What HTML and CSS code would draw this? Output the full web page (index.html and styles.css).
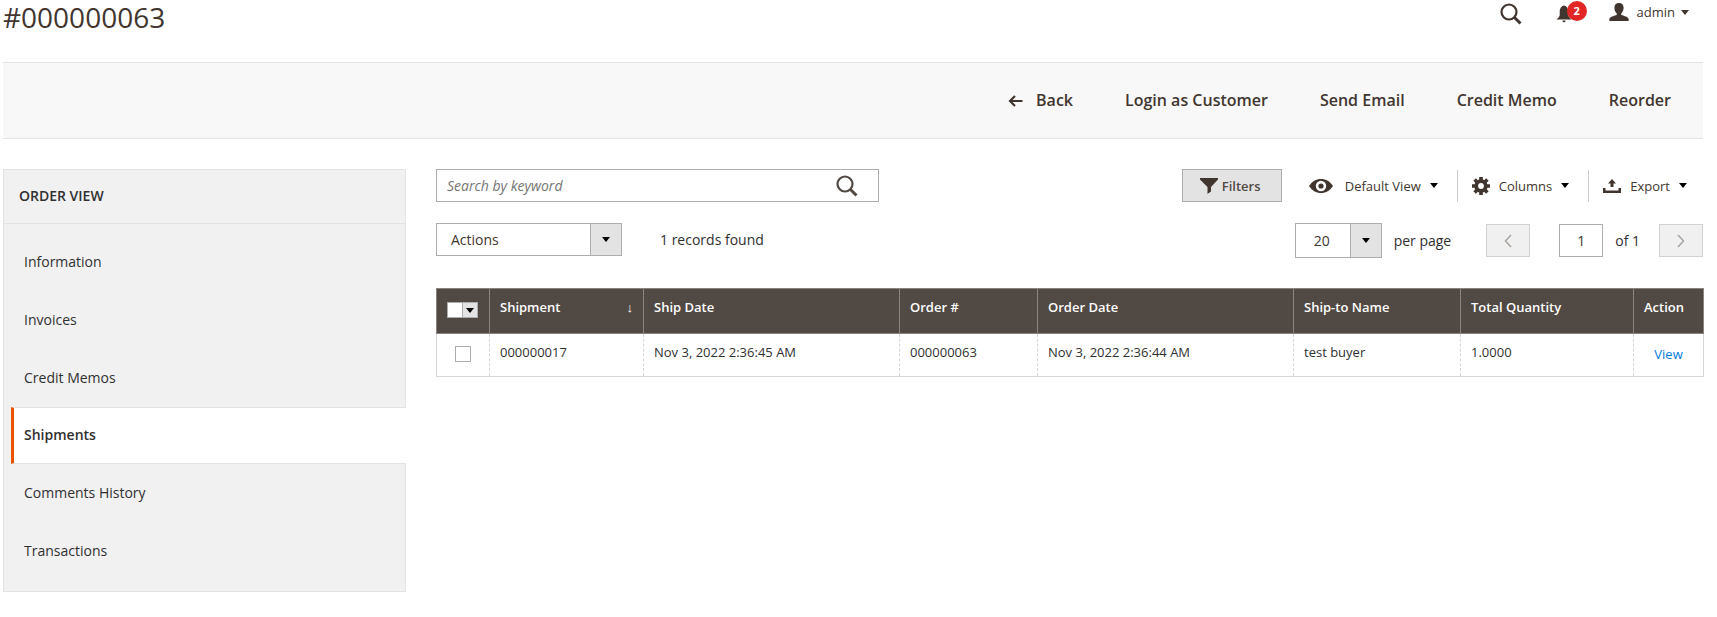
FILE: index.html
```html
<!DOCTYPE html>
<html lang="en">
  <head>
    <meta charset="UTF-8" />
    <meta name="viewport" content="width=device-width, initial-scale=1.0" />
    <title>#000000063 / Orders</title>
    <link rel="stylesheet" href="styles.css">
  </head>
  <body>
    <header class="page-header">
      <h1>#000000063</h1>
      <div class="header-tools">
        <button class="icon-btn" aria-label="Search">
          <svg width="22" height="22" viewBox="0 0 22 22"><circle cx="9" cy="9" r="7.5" fill="none" stroke="currentColor" stroke-width="2.2" /><path d="M14.5 14.5l6 6" stroke="currentColor" stroke-width="3" /></svg>
        </button>
        <button class="icon-btn bell" aria-label="Notifications">
          <svg width="16" height="18" viewBox="0 0 16 18"><path d="M8 0.5c-3 .8-4.300 3-4.300 6v3.500c0 1.500-1 2.500-3.400 4.500h15.400c-2.400-2-3.400-3-3.400-4.500V6.500c0-3-1.300-5.200-4.300-6zM6.300 15.500h3.400c-.3 1.300-1 1.800-1.700 1.800s-1.400-.5-1.700-1.800z" fill="currentColor" /></svg>
          <span class="badge">2</span>
        </button>
        <button class="account">
          <svg width="20" height="18" viewBox="0 0 20 18"><path d="M10 0c3 0 4.600 2 4.600 4.800 0 2.300-1 4.500-2.400 5.700v1.300c2.300 1.300 6.900 1.700 7.400 4.200l.1 2H.3l.1-2c.5-2.500 5.100-2.900 7.400-4.200v-1.300C6.400 9.300 5.400 7.100 5.400 4.800 5.400 2 7 0 10 0z" fill="currentColor" /></svg>
          <span>admin</span>
          <i class="caret"></i>
        </button>
      </div>
    </header>

    <div class="page-actions">
      <button class="back">
        <svg width="15" height="12" viewBox="0 0 15 12"><path d="M14.500 6H2M7 1L2 6l5 5" fill="none" stroke="currentColor" stroke-width="2.200" /></svg>
        Back
      </button>
      <button>Login as Customer</button>
      <button>Send Email</button>
      <button>Credit Memo</button>
      <button>Reorder</button>
    </div>

    <div class="columns">
      <nav class="side">
        <h2>Order View</h2>
        <ul>
          <li><a href="#">Information</a></li>
          <li><a href="#">Invoices</a></li>
          <li><a href="#">Credit Memos</a></li>
          <li class="active"><a href="#">Shipments</a></li>
          <li><a href="#">Comments History</a></li>
          <li><a href="#">Transactions</a></li>
        </ul>
      </nav>

      <main>
        <div class="grid-bar">
          <div class="search">
            <input type="text" placeholder="Search by keyword" aria-label="Search by keyword" />
            <button class="icon-btn" aria-label="Search">
              <svg width="22" height="22" viewBox="0 0 22 22"><circle cx="9" cy="9" r="7.500" fill="none" stroke="currentColor" stroke-width="2.200" /><path d="M14.500 14.500l6 6" stroke="currentColor" stroke-width="3" /></svg>
            </button>
          </div>
          <div class="grid-tools">
            <button class="filters">
              <svg width="18" height="16" viewBox="0 0 18 16"><path d="M0 0h18v1.500L11 9v4.500L7.500 16V9L0 1.500z" fill="currentColor" /></svg>
              Filters
            </button>
            <button class="tool view">
              <svg width="24" height="14" viewBox="0 0 24 14"><path fill-rule="evenodd" d="M0 7c3-4.500 7-7 12-7s9 2.500 12 7c-3 4.500-7 7-12 7S3 11.500 0 7zM12 1.800a5.200 5.200 0 100 10.400 5.200 5.200 0 000-10.400z" fill="currentColor" /><circle cx="12" cy="7" r="2.600" fill="currentColor" /></svg>
              <span>Default View</span>
              <i class="caret"></i>
            </button>
            <button class="tool cols">
              <svg width="18" height="18" viewBox="0 0 18 18"><circle cx="9" cy="9" r="4.800" fill="none" stroke="currentColor" stroke-width="3.800" /><path d="M9 0v3.500M9 14.500V18M0 9h3.500M14.500 9H18M2.600 2.600l2.500 2.500M12.900 12.900l2.500 2.500M2.600 15.400l2.500-2.500M12.900 5.100l2.500-2.500" stroke="currentColor" stroke-width="3.600" /></svg>
              <span>Columns</span>
              <i class="caret"></i>
            </button>
            <button class="tool export">
              <svg width="18" height="14" viewBox="0 0 18 14"><path d="M9 0l4 4.500h-2.500V8h-3V4.500H5zM0 9h2.500v2.500h13V9H18v5H0z" fill="currentColor" /></svg>
              <span>Export</span>
              <i class="caret"></i>
            </button>
          </div>
        </div>

        <div class="grid-bar">
          <div class="mass">
            <select class="actions" aria-label="Actions"><option>Actions</option></select>
            <span>1 records found</span>
          </div>
          <div class="pager">
            <select class="per-page" id="per-page"><option>20</option><option>30</option><option>50</option></select>
            <label for="per-page">per page</label>
            <button class="page-btn prev" disabled aria-label="Previous page">
              <svg width="8" height="14" viewBox="0 0 8 14"><path d="M7 1L1.500 7 7 13" fill="none" stroke="currentColor" stroke-width="1.500" /></svg>
            </button>
            <input type="text" id="page" value="1" />
            <label for="page">of 1</label>
            <button class="page-btn next" disabled aria-label="Next page">
              <svg width="8" height="14" viewBox="0 0 8 14"><path d="M1 1l5.500 6L1 13" fill="none" stroke="currentColor" stroke-width="1.500" /></svg>
            </button>
          </div>
        </div>

        <table>
          <thead>
            <tr>
              <th class="c-check">
                <div class="multicheck">
                  <input type="checkbox" aria-label="Select all" />
                  <button aria-label="Selection options"><i class="caret"></i></button>
                </div>
              </th>
              <th class="c-shipment"><div class="sorted">Shipment <span>↓</span></div></th>
              <th class="c-date">Ship Date</th>
              <th class="c-order">Order #</th>
              <th class="c-date">Order Date</th>
              <th class="c-name">Ship-to Name</th>
              <th class="c-qty">Total Quantity</th>
              <th class="c-action">Action</th>
            </tr>
          </thead>
          <tbody>
            <tr>
              <td class="check"><input type="checkbox" aria-label="Select 000000017" /></td>
              <td>000000017</td>
              <td>Nov 3, 2022 2:36:45 AM</td>
              <td>000000063</td>
              <td>Nov 3, 2022 2:36:44 AM</td>
              <td>test buyer</td>
              <td>1.0000</td>
              <td class="view-cell"><a href="#">View</a></td>
            </tr>
          </tbody>
        </table>
      </main>
    </div>
  </body>
</html>
```

FILE: styles.css
```css
* {
  box-sizing: border-box;
}

body {
  margin: 0;
  padding: 0 14px 0 3px;
  font-family: "Open Sans", sans-serif;
  font-size: 14px;
  line-height: 20px;
  color: #303030;
  background: #fff;
}

button,
input,
select {
  font-family: inherit;
  font-size: 14px;
  color: #41362f;
  margin: 0;
}

button {
  display: flex;
  align-items: center;
  padding: 0;
  border: none;
  background: none;
  cursor: pointer;
}

svg {
  display: block;
  flex: none;
}

.caret {
  border: 4px solid transparent;
  border-top: 5px solid #000;
  border-bottom: none;
}

/* Header */
.page-header {
  display: flex;
  justify-content: space-between;
  align-items: flex-start;
  height: 62px;
}

h1 {
  margin: 0;
  font-size: 28px;
  line-height: 34px;
  font-weight: 400;
  color: #41362f;
}

.header-tools {
  display: flex;
  align-items: center;
  height: 24px;
  padding-right: 14px;
}

.header-tools .icon-btn {
  margin-right: 34px;
  padding-top: 4px;
}

.header-tools .bell {
  position: relative;
  margin-right: 37px;
}

.badge {
  position: absolute;
  top: 0;
  left: 11px;
  width: 20px;
  height: 20px;
  border-radius: 50%;
  background: #e22626;
  color: #fff;
  font-size: 11px;
  font-weight: 700;
  line-height: 20px;
}

.account {
  font-size: 13px;
}

.account span {
  margin: 0 6px 0 8px;
}

.account .caret {
  border-top-color: #41362f;
}

/* Main buttons */
.page-actions {
  display: flex;
  justify-content: flex-end;
  gap: 52px;
  padding: 24px 32px 24px 0;
  background: #f8f8f8;
  border-top: 1px solid #e3e3e3;
  border-bottom: 1px solid #e3e3e3;
}

.page-actions button {
  font-size: 16px;
  font-weight: 600;
  line-height: 27px;
}

.back svg {
  margin-right: 13px;
}

.columns {
  display: flex;
  align-items: flex-start;
  gap: 30px;
  margin-top: 30px;
}

/* Side navigation */
.side {
  flex: 0 0 24%;
  max-width: 403px;
  background: #f1f1f1;
  border: 1px solid #e3e3e3;
  padding-bottom: 11px;
}

.side h2 {
  margin: 0;
  padding: 16px 15px 17px;
  font-size: 14px;
  font-weight: 600;
  text-transform: uppercase;
  border-bottom: 1px solid #e3e3e3;
}

.side ul {
  list-style: none;
  margin: 9px 0 0;
  padding: 0;
}

.side a {
  display: block;
  padding: 19px 20px;
  color: #303030;
  text-decoration: none;
}

.side .active a {
  margin: 0 -1px 0 7px;
  padding: 17px 10px 18px;
  background: #fff;
  border: 1px solid #e3e3e3;
  border-width: 1px 0;
  border-left: 3px solid #eb5202;
  font-weight: 600;
}

/* Grid toolbar */
main {
  flex: 1;
  min-width: 0;
}

.grid-bar {
  display: flex;
  justify-content: space-between;
  align-items: flex-start;
  margin-bottom: 21px;
}

.search {
  display: flex;
  width: 35%;
  height: 33px;
  padding-right: 20px;
  border: 1px solid #adadad;
}

.search input {
  flex: 1;
  min-width: 0;
  padding: 0 10px;
  border: none;
  outline: none;
}

.search input::placeholder {
  font-style: italic;
  color: #757575;
}

.search .icon-btn {
  color: #514943;
}

.grid-tools,
.mass,
.pager {
  display: flex;
  align-items: center;
}

.filters {
  width: 100px;
  height: 33px;
  padding-left: 17px;
  gap: 4px;
  background: #e3e3e3;
  border: 1px solid #adadad;
  font-size: 13px;
  font-weight: 600;
  color: #514943;
}

.tool {
  height: 32px;
  font-size: 13px;
}

.tool svg,
.filters svg {
  color: #41362f;
}

.tool span {
  margin: 0 9px;
}

.view {
  padding: 0 19px 0 27px;
}

.view span {
  margin-left: 12px;
}

.cols,
.export {
  border-left: 1px solid #ccc;
}

.cols {
  padding: 0 19px 0 14px;
}

.export {
  padding: 0 16px 0 14px;
}

select {
  appearance: none;
  height: 33px;
  border: 1px solid #adadad;
  border-radius: 0;
  background:
    url("data:image/svg+xml,%3Csvg xmlns='http://www.w3.org/2000/svg' width='8' height='5'%3E%3Cpath d='M0 0h8L4 5z'/%3E%3C/svg%3E") right 11px center no-repeat,
    linear-gradient(#adadad, #adadad) right 30px top / 1px 100% no-repeat,
    linear-gradient(#e3e3e3, #e3e3e3) right top / 30px 100% no-repeat #fff;
}

.actions {
  width: 186px;
  padding: 0 40px 0 14px;
}

.mass span {
  margin-left: 38px;
}

.per-page {
  width: 87px;
  height: 35px;
  padding: 0 34px 0 18px;
}

.pager label {
  margin-left: 12px;
}

.page-btn,
.pager input {
  width: 44px;
  height: 33px;
  border: 1px solid #adadad;
  text-align: center;
}

.page-btn {
  justify-content: center;
  background: #f0f0f0;
  border-color: #d1d1d1;
  color: #a8a4a1;
}

.prev {
  margin: 0 29px 0 35px;
}

.next {
  margin-left: 19px;
}

/* Data grid */
table {
  width: 100%;
  margin-top: 30px;
  table-layout: fixed;
  border-collapse: collapse;
  font-size: 13px;
}

th,
td {
  padding: 8px 10px 15px;
  text-align: left;
  vertical-align: top;
}

th {
  background: #514943;
  color: #fff;
  font-weight: 600;
  border: 1px solid #8a837f;
}

td {
  padding-bottom: 14px;
  border: 1px dashed #d6d6d6;
  border-bottom-style: solid;
}

td:first-child {
  border-left-style: solid;
}

td:last-child {
  border-right-style: solid;
}

.c-check {
  width: 53px;
}

.c-shipment {
  width: 154px;
}

.c-date {
  width: 256px;
}

.c-order {
  width: 138px;
}

.c-name {
  width: 167px;
}

.c-qty {
  width: 173px;
}

.c-action {
  width: 70px;
}

.sorted {
  display: flex;
  justify-content: space-between;
}

.sorted span {
  font-weight: 400;
}

input[type="checkbox"] {
  display: block;
  appearance: none;
  width: 16px;
  height: 16px;
  border: 1px solid #adadad;
  background: #fff;
}

.multicheck {
  display: flex;
  width: 31px;
  margin-top: 5px;
}

.multicheck button {
  flex: 1;
  justify-content: center;
  height: 16px;
  background: #e3e3e3;
  border: 1px solid #adadad;
  border-left: none;
}

.check input {
  margin: 4px auto 0;
}

.view-cell {
  padding-top: 10px;
  padding-bottom: 12px;
  text-align: center;
}

.view-cell a {
  color: #007bdb;
  text-decoration: none;
}
```
